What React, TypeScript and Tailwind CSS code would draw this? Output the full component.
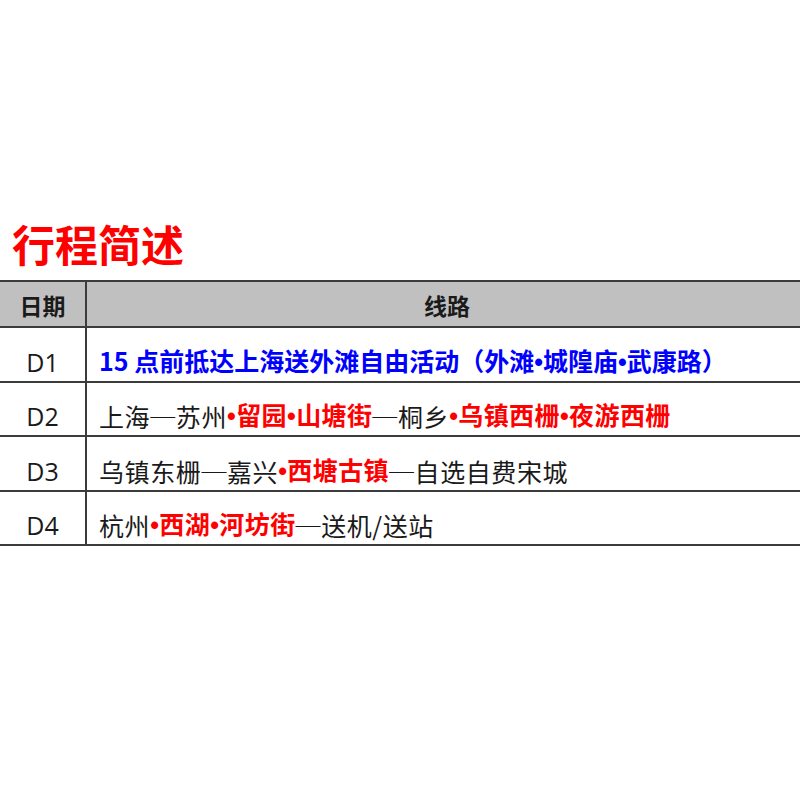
const cjk = "font-['Noto_Sans_CJK_SC',sans-serif]"

type Seg = { t: string; c?: "red" | "blue" }

const rows: { day: string; segs: Seg[] }[] = [
  {
    day: "D1",
    segs: [{ t: "15 点前抵达上海送外滩自由活动（外滩•城隍庙•武康路）", c: "blue" }],
  },
  {
    day: "D2",
    segs: [
      { t: "上海─苏州" },
      { t: "•留园•山塘街", c: "red" },
      { t: "─桐乡" },
      { t: "•乌镇西栅•夜游西栅", c: "red" },
    ],
  },
  {
    day: "D3",
    segs: [{ t: "乌镇东栅─嘉兴" }, { t: "•西塘古镇", c: "red" }, { t: "─自选自费宋城" }],
  },
  {
    day: "D4",
    segs: [{ t: "杭州" }, { t: "•西湖•河坊街", c: "red" }, { t: "─送机/送站" }],
  },
]

function segClass(s: Seg) {
  if (s.c === "red") return "text-[#ff0000] font-bold tracking-[0.4px]"
  if (s.c === "blue") return "text-[#0000ff] font-bold"
  return "text-[#1a1a1a] tracking-[0.6px]"
}

// bullets are narrow in the reference, so take them from a latin font
function Text({ t }: { t: string }) {
  return (
    <>
      {t.split(/(•)/).map((p, i) =>
        p === "•" ? (
          <span key={i} className="font-['Liberation_Sans',sans-serif] font-bold">
            •
          </span>
        ) : (
          <span key={i}>{p}</span>
        )
      )}
    </>
  )
}

export default function App() {
  return (
    <div className={`w-[800px] h-[800px] overflow-hidden bg-white ${cjk}`}>
      <div className="pt-[222px] pl-[12px]">
        <h1 className="text-[43px] leading-[43px] font-bold text-[#ff0000]">行程简述</h1>
      </div>
      <div className="mt-[15px] w-[807px] border-t-2 border-[#3c3c3c]">
        <div className="flex h-[46px] bg-[#c0c0c0] border-b-2 border-[#3c3c3c]">
          <div className="w-[87px] flex items-center justify-center pt-[2px] border-r-2 border-[#3c3c3c] text-[23px] font-bold text-[#1a1a1a]">
            日期
          </div>
          <div className="flex-1 flex items-center justify-center pt-[2px] text-[23px] font-bold text-[#1a1a1a]">
            线路
          </div>
        </div>
        {rows.map((r) => (
          <div key={r.day} className="flex h-[54.5px] border-b-2 border-[#3c3c3c]">
            <div className="w-[87px] flex items-end justify-center pb-[2px] border-r-2 border-[#3c3c3c] text-[25px] leading-[34px] text-[#1a1a1a] font-['Open_Sans',sans-serif]">
              {r.day}
            </div>
            <div className="flex-1 flex items-end pl-[12px] pb-[2px] text-[25px] leading-[34px] whitespace-nowrap">
              {r.segs.map((s, i) => (
                <span key={i} className={segClass(s)}>
                  <Text t={s.t} />
                </span>
              ))}
            </div>
          </div>
        ))}
      </div>
    </div>
  )
}
